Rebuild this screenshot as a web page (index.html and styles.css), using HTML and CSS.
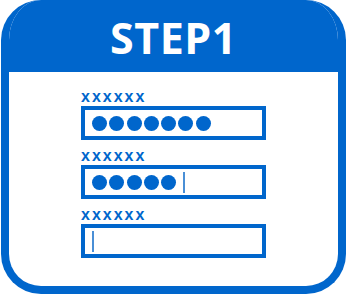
FILE: index.html
```html
<!DOCTYPE html>
<html>
<head>
<meta charset="utf-8">
<link rel="stylesheet" href="styles.css">
</head>
<body>
<div class="card">
  <div class="header">STEP1</div>
  <div class="content">
    <div class="field">
      <div class="label">xxxxxx</div>
      <div class="box">
        <span class="dot"></span><span class="dot"></span><span class="dot"></span><span class="dot"></span><span class="dot"></span><span class="dot"></span><span class="dot"></span>
      </div>
    </div>
    <div class="field">
      <div class="label">xxxxxx</div>
      <div class="box">
        <span class="dot"></span><span class="dot"></span><span class="dot"></span><span class="dot"></span><span class="dot"></span><span class="cursor"></span>
      </div>
    </div>
    <div class="field">
      <div class="label">xxxxxx</div>
      <div class="box">
        <span class="cursor"></span>
      </div>
    </div>
  </div>
</div>
</body>
</html>
```
FILE: styles.css
```css
html, body {
  margin: 0;
  padding: 0;
  background: #ffffff;
}
.card {
  box-sizing: border-box;
  width: 345px;
  height: 294px;
  margin-left: 1px;
  border: 8px solid #0066cc;
  border-top: 0;
  border-radius: 40px;
  overflow: hidden;
  display: flex;
  flex-direction: column;
}
.header {
  height: 72px;
  background: #0066cc;
  color: #ffffff;
  font-family: "Open Sans", sans-serif;
  font-weight: 700;
  font-size: 43px;
  line-height: 76px;
  text-align: center;
  margin: 0 -8px;
  letter-spacing: 0.5px;
}
.content {
  display: flex;
  flex-direction: column;
  padding: 18px 0 0 72px;
  gap: 9px;
}
.field {
  display: flex;
  flex-direction: column;
  width: 185px;
}
.label {
  font-family: "Liberation Sans", sans-serif;
  font-weight: 700;
  font-size: 16px;
  line-height: 14px;
  letter-spacing: 2px;
  color: #0066cc;
  margin-bottom: 2px;
}
.box {
  box-sizing: border-box;
  height: 34px;
  border: 4px solid #0066cc;
  display: flex;
  align-items: center;
  padding-left: 7px;
  gap: 2.3px;
}
.dot {
  width: 15px;
  height: 15px;
  border-radius: 50%;
  background: #0066cc;
}
.cursor {
  width: 2px;
  height: 21px;
  background: #4a8fd6;
}
.dot + .cursor {
  margin-left: 4.5px;
}
```
